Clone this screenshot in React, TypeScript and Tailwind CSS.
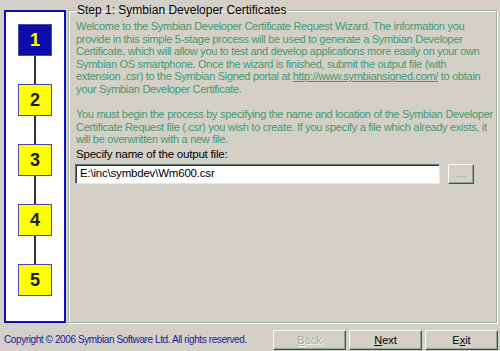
import React from 'react';

const STEPS = [1, 2, 3, 4, 5];

const StepBox = ({ n, active }: { n: number; active: boolean }) => (
  <div
    className={`w-[34px] h-[32px] flex items-center justify-center border border-[#4a4ab0] text-[18px] font-bold leading-none ${
      active ? 'bg-[#0c0caa] text-[#ffff00]' : 'bg-[#ffff00] text-[#202020]'
    }`}
  >
    {n}
  </div>
);

const WinButton = ({ label, hot, disabled }: { label: string; hot: number; disabled?: boolean }) => (
  <button
    className={`w-[73px] h-[20px] bg-[#d4d0c8] border border-t-white border-l-white border-r-[#2f5a48] border-b-[#2f5a48] shadow-[inset_-1px_-1px_0_#8fa89a] text-[11px] ${
      disabled ? 'text-[#9aa9a0] [text-shadow:1px_1px_0_#fff]' : 'text-black'
    }`}
  >
    {label.slice(0, hot)}
    <span className="underline">{label[hot]}</span>
    {label.slice(hot + 1)}
  </button>
);

export default function App() {
  return (
    <div className="w-[500px] h-[351px] bg-[#d4d0c8] flex flex-col font-['Liberation_Sans',Arial,sans-serif] overflow-hidden">
      <div className="flex pt-[10px] pl-[4px] pr-[3px] gap-[2px] h-[323px]">
        {/* left step indicator */}
        <div className="w-[62px] shrink-0 h-full bg-white border-2 border-[#1010b0] flex flex-col items-center pt-[12px]">
          {STEPS.map((n, i) => (
            <React.Fragment key={n}>
              {i > 0 && <div className="w-[2px] h-[28px] bg-[#333333]" />}
              <StepBox n={n} active={n === 1} />
            </React.Fragment>
          ))}
        </div>

        {/* group box */}
        <fieldset className="flex-1 min-w-0 h-[319px] -mt-[6px] border border-[#9db5a8] shadow-[inset_1px_1px_0_#fff,1px_1px_0_#fff] pl-[6px] pr-[8px]">
          <legend className="ml-0 px-[2px] text-[12px] leading-[13px] text-black">
            Step 1: Symbian Developer Certificates
          </legend>
          <div className="pl-[1px] pt-[3px] text-[11px] leading-[12.6px] text-[#439a6e] tracking-[-0.3px] whitespace-nowrap">
            <p>
              Welcome to the Symbian Developer Certificate Request Wizard. The information you
              <br />
              provide in this simple 5-stage process will be used to generate a Symbian Developer
              <br />
              Certificate, which will allow you to test and develop applications more easily on your own
              <br />
              Symbian OS smartphone. Once the wizard is finished, submit the output file (with
              <br />
              extension .csr) to the Symbian Signed portal at{' '}
              <span className="underline">http://www.symbiansigned.com/</span> to obtain
              <br />
              your Symbian Developer Certificate.
            </p>
            <p className="mt-[12.6px]">
              You must begin the process by specifying the name and location of the Symbian Developer
              <br />
              Certificate Request file (.csr) you wish to create. If you specify a file which already exists, it
              <br />
              will be overwritten with a new file.
            </p>
          </div>
          <div className="pl-[1px] mt-[2px] text-[11.5px] leading-[13px] text-black tracking-[-0.2px]">
            Specify name of the output file:
          </div>
          <div className="flex items-center mt-[3px]">
            <div className="w-[365px] h-[20px] bg-white border border-t-[#5a7a6a] border-l-[#5a7a6a] border-r-[#ece6e0] border-b-[#ece6e0] shadow-[inset_1px_1px_0_#2a3a32] flex items-center pl-[4px] text-[11.5px] text-black tracking-[-0.2px]">
              E:\inc\symbdev\Wm600.csr
            </div>
            <button className="ml-[8px] w-[26px] h-[20px] bg-[#d4d0c8] border border-t-white border-l-white border-r-[#2f5a48] border-b-[#2f5a48] shadow-[inset_-1px_-1px_0_#8fa89a] text-[10px] leading-none text-[#6a8a7a]">
              ...
            </button>
          </div>
        </fieldset>
      </div>

      {/* footer */}
      <div className="flex-1 flex items-start pl-[4px] pr-[2px]">
        <div className="pt-[9px] text-[10px] text-[#1a1a9a] tracking-[-0.4px] whitespace-nowrap">
          Copyright © 2006 Symbian Software Ltd. All rights reserved.
        </div>
        <div className="ml-auto flex gap-[3px] pt-[7px]">
          <WinButton label="Back" hot={0} disabled />
          <WinButton label="Next" hot={0} />
          <WinButton label="Exit" hot={1} />
        </div>
      </div>
    </div>
  );
}
